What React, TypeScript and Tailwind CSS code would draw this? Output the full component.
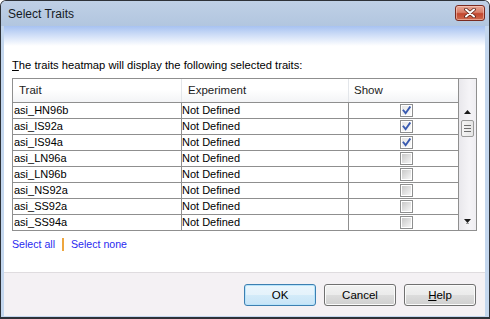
import React from "react";

const traits = [
  "asi_HN96b",
  "asi_IS92a",
  "asi_IS94a",
  "asi_LN96a",
  "asi_LN96b",
  "asi_NS92a",
  "asi_SS92a",
  "asi_SS94a",
];
const checked = [true, true, true, false, false, false, false, false];

function CheckBox({ on }: { on: boolean }) {
  return (
    <div className="w-[13px] h-[13px] border border-[#8e8f8f] bg-white p-[1px]">
      <div
        className={
          on
            ? "w-full h-full bg-[linear-gradient(135deg,#e6e6e6_0%,#fbfbfb_100%)] relative"
            : "w-full h-full bg-[linear-gradient(135deg,#c9c9c9_0%,#f6f6f6_100%)]"
        }
      >
        {on && (
          <svg width="9" height="9" viewBox="0 0 9 9" className="absolute left-0 top-0">
            <path d="M1.5 4.5 L3.6 7.2 L7.8 1.2" fill="none" stroke="#3a5bb0" strokeWidth="1.9" strokeLinecap="square" />
          </svg>
        )}
      </div>
    </div>
  );
}

function Btn({ children, def }: { children: React.ReactNode; def?: boolean }) {
  return (
    <button
      className={
        def
          ? "w-[72px] h-[22px] rounded-[3px] border border-[#3c7fb1] shadow-[inset_0_0_0_1px_#b8e4fb] bg-[linear-gradient(to_bottom,#eaf6fd_0%,#e4f2fb_50%,#d3ebf9_50%,#c7e4f7_100%)] text-[11.5px] leading-[20px] text-black font-['Liberation_Sans',sans-serif] flex items-center justify-center"
          : "w-[72px] h-[22px] rounded-[3px] border border-[#707070] shadow-[inset_0_0_0_1px_#fbfbfb] bg-[linear-gradient(to_bottom,#f2f2f2_0%,#ebebeb_50%,#dddddd_50%,#cfcfcf_100%)] text-[11.5px] leading-[20px] text-black font-['Liberation_Sans',sans-serif] flex items-center justify-center"
      }
    >
      {children}
    </button>
  );
}

export default function App() {
  return (
    <div className="w-[490px] h-[319px] bg-[#c4d7ee] border border-[#2e3238] border-b-2 rounded-t-[6px] flex flex-col overflow-hidden font-['Liberation_Sans',sans-serif]">
      {/* title bar */}
      <div className="h-[25px] flex items-center justify-between pl-[7px] pr-[4px] bg-[linear-gradient(to_bottom,#bfd0e6_0%,#b2c6df_100%)]">
        <span className="text-[12px] text-[#151a24] leading-[14px]">Select Traits</span>
        <div className="w-[30px] h-[16px] mb-[2px] rounded-[3px] border border-[#7a2a20] bg-[linear-gradient(to_bottom,#e8a593_0%,#d9806b_45%,#c2472f_55%,#cf6a4e_100%)] flex items-center justify-center shadow-[inset_0_0_0_1px_rgba(255,220,210,0.5)]">
          <svg width="12" height="10" viewBox="0 0 12 10">
            <path d="M2 1.5 L10 8.5 M10 1.5 L2 8.5" stroke="#5a2318" strokeWidth="3.6" strokeLinecap="round" />
            <path d="M2 1.5 L10 8.5 M10 1.5 L2 8.5" stroke="#ffffff" strokeWidth="2" strokeLinecap="round" />
          </svg>
        </div>
      </div>

      {/* client area */}
      <div className="flex-1 ml-[3px] mr-[4px] mb-[1px] flex flex-col bg-[linear-gradient(to_bottom,#a7c2f1_0px,#ffffff_20px)]">
        <div className="pt-[32px] px-[8px] flex flex-col">
          <div className="text-[11.2px] leading-[14px] text-black">
            <span className="underline">T</span>he traits heatmap will display the following selected traits:
          </div>

          {/* table */}
          <div className="mt-[6px] h-[153px] border border-[#8f8f8f] flex bg-white">
            <div className="w-[445px] flex flex-col">
              <div className="h-[24px] flex border-b border-[#8f8f8f] bg-[linear-gradient(to_bottom,#ffffff_0%,#ffffff_45%,#f3f4f6_100%)] text-[11.5px] text-[#1c1c1c]">
                <div className="w-[169px] border-r border-[#e3e6ea] pl-[6px] flex items-center">Trait</div>
                <div className="w-[167px] border-r border-[#e3e6ea] pl-[6px] flex items-center">Experiment</div>
                <div className="flex-1 pl-[5px] flex items-center">Show</div>
              </div>
              <div className="flex-1 overflow-hidden">
                {traits.map((t, i) => (
                  <div key={t} className="h-[16px] flex border-b border-[#8f8f8f] text-[11px] text-black leading-[15px]">
                    <div className="w-[169px] border-r border-[#8f8f8f] pl-[1px] flex items-center">{t}</div>
                    <div className="w-[167px] border-r border-[#8f8f8f] pl-[0px] flex items-center">Not Defined</div>
                    <div className="flex-1 flex items-center justify-center pl-[5px]">
                      <CheckBox on={checked[i]} />
                    </div>
                  </div>
                ))}
              </div>
            </div>
            {/* scrollbar */}
            <div className="flex-1 border-l border-[#8f8f8f] flex flex-col bg-[linear-gradient(to_right,#e9e8ec_0%,#f5f4f7_60%,#efeef2_100%)]">
              <div className="h-[24px]" />
              <div className="h-[17px] flex items-center justify-center">
                <svg width="7" height="4" viewBox="0 0 7 4">
                  <path d="M0 4 L3.5 0 L7 4 Z" fill="#1a1a1a" />
                </svg>
              </div>
              <div className="h-[17px] mx-[2px] rounded-[2px] border border-[#9a9a9a] bg-[linear-gradient(to_right,#f4f4f4_0%,#e6e6e6_100%)] flex flex-col items-center justify-center gap-[2px]">
                <div className="w-[7px] h-[1px] bg-[#6e6e6e]" />
                <div className="w-[7px] h-[1px] bg-[#6e6e6e]" />
                <div className="w-[7px] h-[1px] bg-[#6e6e6e]" />
              </div>
              <div className="flex-1" />
              <div className="h-[17px] flex items-center justify-center">
                <svg width="7" height="5" viewBox="0 0 7 5">
                  <path d="M0 0 L7 0 L3.5 4 Z" fill="#1a1a1a" />
                  <path d="M2 4.5 L5 4.5" stroke="#9a9a9a" strokeWidth="1" />
                </svg>
              </div>
            </div>
          </div>

          {/* links */}
          <div className="mt-[6px] h-[14px] flex items-center gap-[7px] text-[10.6px] leading-[14px] text-[#2a2af0]">
            <span>Select all</span>
            <span className="w-[2px] h-[13px] bg-[#eea63e]" />
            <span>Select none</span>
          </div>
        </div>

        <div className="flex-1" />

        {/* button panel */}
        <div className="h-[44px] border-t border-[#dfdcdf] bg-[#f4f1f4] flex justify-end items-start pt-[11px] pr-[9px] gap-[8px]">
          <Btn def>OK</Btn>
          <Btn>Cancel</Btn>
          <Btn>
            <span>
              <span className="underline">H</span>elp
            </span>
          </Btn>
        </div>
      </div>
    </div>
  );
}
